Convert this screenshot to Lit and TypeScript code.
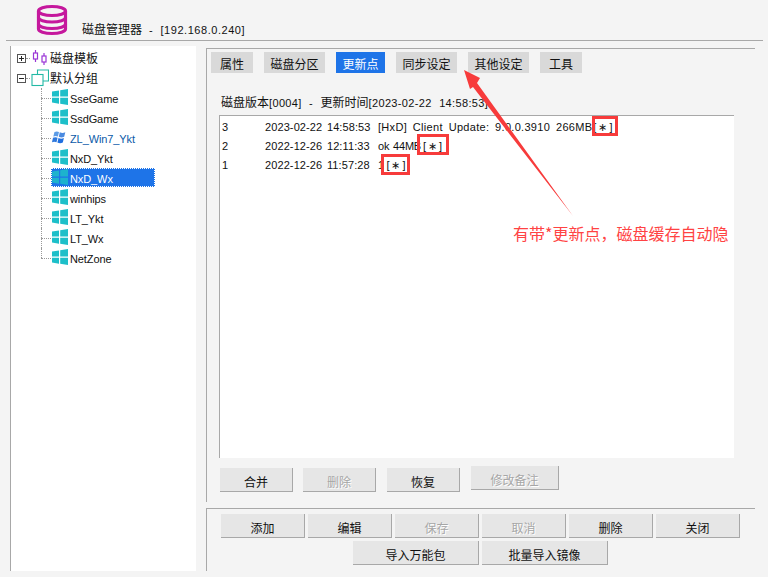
import { LitElement, html, css, svg } from "lit";
import { customElement } from "lit/decorators.js";

const split = (t: string) =>
  t.split(/([\u3000-\u9fff\uff00-\uffef]+)/).map((p, i) => (i % 2 ? html`<span class="cjk">${p}</span>` : p));

const winIcon = svg`<svg class="ico" width="16" height="16" viewBox="0 0 16 16"><path fill="#1dbfc9" d="M0 2.600 7 1.500v6H0zM8.200 1.300 16 0v7.500H8.200zM0 8.700h7v6L0 13.600zM8.200 8.700H16V16l-7.800-1.200z"/></svg>`;
const win7Icon = svg`<svg class="ico" width="16" height="16" viewBox="0 0 16 16"><path fill="#5b9be6" d="M2.500 3c1.800-.8 3.200-.6 4.500 0L5.900 7.500C4.500 6.800 3 6.700 1.300 7.500z"/><path fill="#4a8ae0" d="M7.800 3.300c1.800.9 3.500.9 5.500 0L12.200 7.800c-1.800.9-3.600.9-5.400 0z"/><path fill="#2f78dc" d="M1 8.700c1.700-.8 3.200-.7 4.600 0L4.500 13.300c-1.500-.8-3-.8-4.600 0z"/><path fill="#1f6fe0" d="M6.500 9c1.900.9 3.600.9 5.400 0l-1.100 4.600c-1.800.9-3.600.9-5.400 0z"/></svg>`;

type Node = { label: string; win7?: boolean; selected?: boolean };
const children: Node[] = [
  { label: "SseGame" },
  { label: "SsdGame" },
  { label: "ZL_Win7_Ykt", win7: true },
  { label: "NxD_Ykt" },
  { label: "NxD_Wx", selected: true },
  { label: "winhips" },
  { label: "LT_Ykt" },
  { label: "LT_Wx" },
  { label: "NetZone" },
];
const tabs = [
  { label: "属性", w: 42 },
  { label: "磁盘分区", w: 61 },
  { label: "更新点", w: 49, active: true },
  { label: "同步设定", w: 61 },
  { label: "其他设定", w: 61 },
  { label: "工具", w: 42 },
];
const rows = [
  { id: "3", date: "2023-02-22 14:58:53", note: "[HxD] Client Update: 9.0.0.3910 266MB", gap: 1, tight: false },
  { id: "2", date: "2022-12-26 12:11:33", note: "ok 44MB", gap: 2, tight: true },
  { id: "1", date: "2022-12-26 11:57:28", note: "1", gap: 2, tight: false },
];

@customElement("app-root")
class AppRoot extends LitElement {
  static styles = css`
    :host {
      display: block;
      width: 768px;
      height: 577px;
      position: relative;
      overflow: hidden;
      background: #f4f4f4;
      color: #111;
      font: 11px/16px "Liberation Sans", "Noto Sans CJK SC", sans-serif;
      word-spacing: 1.5px;
      letter-spacing: 0.1px;
    }
    .cjk { font: 12px/16px "Noto Sans CJK SC", sans-serif; letter-spacing: 0; }
    header {
      height: 40px;
      margin: 0 5px 0 6px;
      border-bottom: 1px solid #a8a8a8;
      display: flex;
      align-items: flex-start;
    }
    .logo { margin: 3px 0 0 29px; }
    .title { margin: 21px 0 0 13px; letter-spacing: 0.55px; word-spacing: 3.5px; }
    main { display: flex; align-items: flex-start; padding: 5px 0 0 10px; }
    .tree {
      width: 186px;
      height: 525px;
      box-sizing: border-box;
      background: #fff;
      border-left: 1px solid #a8a8a8;
      padding-top: 2px;
      position: relative;
      letter-spacing: -0.1px;
    }
    .node { height: 20px; display: flex; align-items: center; position: relative; white-space: nowrap; }
    .exp {
      width: 9px; height: 9px; box-sizing: border-box; border: 1px solid #555; margin-left: 6px;
      position: relative; background: #fff; flex: none;
    }
    .exp::before { content: ""; position: absolute; left: 1px; right: 1px; top: 3px; height: 1px; background: #222; }
    .exp.plus::after { content: ""; position: absolute; top: 1px; bottom: 1px; left: 3px; width: 1px; background: #222; }
    .dash { width: 4px; border-top: 1px dotted #999; flex: none; margin-right: 1px; }
    .child { padding-left: 30px; }
    .child .hl { width: 10px; border-top: 1px dotted #999; flex: none; }
    .child .vl { position: absolute; left: 30px; top: 0; bottom: 0; border-left: 1px dotted #999; }
    .child.last .vl { bottom: 10px; }
    .label { padding: 0 1px; }
    .item { display: flex; align-items: center; height: 19px; padding-left: 1px; margin-bottom: 2px; box-sizing: border-box; }
    .item .label { padding-top: 4px; line-height: 15px; }
    .item .ico { flex: none; margin-right: 1px; }
    .win7 .label { color: #0b5aa8; }
    .sel { background: #1e74e8; outline: 1px dotted #fff; outline-offset: -1px; width: 104px; color: #fff; }
    .sel .ico { opacity: 0.85; }
    .side { width: 549px; margin-left: 10px; }
    .panel {
      border: 1px solid #a8a8a8;
      border-width: 1px 0 0 1px;
      box-sizing: border-box;
    }
    .upper { height: 454px; padding: 3px 0 0 4px; margin-top: 2px; }
    .lower { height: 63px; margin-top: 6px; padding: 5px 0 0 14px; }
    .tabs { display: flex; gap: 11px; }
    .tab { height: 21px; box-sizing: border-box; padding-top: 2px; background: #d9d9d9; text-align: center; line-height: 19px; }
    .tab .cjk { line-height: 19px; }
    .tab.on { background: #1e74e8; color: #fff; }
    .caption { margin: 21px 0 0 10px; height: 16px; white-space: nowrap; letter-spacing: 0.35px; word-spacing: 4px; }
    .list {
      width: 515px;
      height: 343px;
      margin: 5px 0 0 8px;
      box-sizing: border-box;
      background: #fff;
      border: 1px solid #a8a8a8;
      border-width: 1px 0 0 1px;
      padding: 2px 0 0 2px;
    }
    .line { display: grid; grid-template-columns: 43px 113px 1fr; height: 19px; line-height: 19px; white-space: nowrap; }
    .rem { letter-spacing: 0.3px; word-spacing: 2.5px; }
    .rem.tight { letter-spacing: -0.2px; word-spacing: 1px; }
    .star { margin-left: var(--gap); letter-spacing: 2px; }
    .actions { display: flex; align-items: flex-start; margin: 10px 0 0 9px; }
    .btn {
      height: 24px;
      box-sizing: border-box;
      padding-top: 4px;
      background: #e6e6e6;
      border-right: 1px solid #a8a8a8;
      border-bottom: 1px solid #a8a8a8;
      text-align: center;
      line-height: 19px;
      flex: none;
    }
    .btn .cjk { line-height: 19px; }
    .btn.off { color: #a6a6a6; text-shadow: 1px 1px 0 #fff; }
    .actions .btn { width: 73px; margin-right: 11px; }
    .actions .btn:first-child { margin-right: 10px; }
    .actions .btn.wide { width: 88px; margin-top: -2px; }
    .btnrow { display: flex; gap: 3px; }
    .btnrow .btn { width: 84px; }
    .btnrow.second { margin: 3px 0 0 132px; }
    .btnrow.second .btn { width: 126px; }
    .anno { position: absolute; left: 0; top: 0; pointer-events: none; }
    .mark { position: absolute; box-sizing: border-box; border: 3px solid #f73b3b; }
    .note {
      position: absolute; left: 513px; top: 222px; white-space: nowrap; color: #ff4343;
      font: 16px/22px "Noto Sans CJK SC", sans-serif; letter-spacing: 0;
    }
  `;

  render() {
    return html`
      <header>
        <svg class="logo" width="34" height="34" viewBox="0 0 34 34" fill="none" stroke="#c5189d" stroke-width="3.200">
          <ellipse cx="17" cy="8" rx="13.500" ry="4.500" />
          <path d="M3.500 8v18c0 2.500 6 4.500 13.500 4.500S30.500 28.500 30.500 26V8" />
          <path d="M3.500 14.500c0 2.500 6 4.500 13.500 4.500s13.500-2 13.500-4.500M3.500 21c0 2.500 6 4.500 13.500 4.500S30.500 23.500 30.500 21" />
        </svg>
        <div class="title">${split("磁盘管理器 - [192.168.0.240]")}</div>
      </header>
      <main>
        <nav class="tree">
          <div class="node root">
            <span class="exp plus"></span><span class="dash"></span>
            <svg width="18" height="18" viewBox="0 0 18 18" fill="none" stroke="#9a35d6" stroke-width="1.200">
              <path d="M4.500 1v3M4.500 10v3M13 4v3M13 13v3" /><rect x="2.500" y="4" width="4" height="6" /><rect x="11" y="7" width="4" height="6" />
            </svg>
            <span class="label"><span class="cjk">磁盘模板</span></span>
          </div>
          <div class="node root">
            <span class="exp"></span><span class="dash"></span>
            <svg width="18" height="18" viewBox="0 0 18 18" fill="none" stroke="#22b9a5" stroke-width="1.100">
              <rect x="1" y="5.500" width="11" height="11" /><path d="M6.500 5.500V1h11v11H12" />
            </svg>
            <span class="label"><span class="cjk">默认分组</span></span>
          </div>
          ${children.map(
            (n, i) => html`
              <div class="node child ${i === children.length - 1 ? "last" : ""} ${n.win7 ? "win7" : ""}">
                <span class="vl"></span><span class="hl"></span>
                <div class="item ${n.selected ? "sel" : ""}">
                  ${n.win7 ? win7Icon : winIcon}<span class="label">${n.label}</span>
                </div>
              </div>
            `
          )}
        </nav>
        <section class="side">
          <div class="panel upper">
            <div class="tabs">
              ${tabs.map(
                (t) => html`<div class="tab ${t.active ? "on" : ""}" style="width:${t.w}px"><span class="cjk">${t.label}</span></div>`
              )}
            </div>
            <div class="caption">${split("磁盘版本[0004] - 更新时间[2023-02-22 14:58:53]")}</div>
            <div class="list">
              ${rows.map(
                (r) => html`<div class="line">
                  <span>${r.id}</span><span>${r.date}</span>
                  <span class="rem ${r.tight ? "tight" : ""}">${r.note}<span class="star" style="--gap:${r.gap}px">[∗]</span></span>
                </div>`
              )}
            </div>
            <div class="actions">
              <div class="btn"><span class="cjk">合并</span></div>
              <div class="btn off"><span class="cjk">删除</span></div>
              <div class="btn"><span class="cjk">恢复</span></div>
              <div class="btn off wide"><span class="cjk">修改备注</span></div>
            </div>
          </div>
          <div class="panel lower">
            <div class="btnrow">
              <div class="btn"><span class="cjk">添加</span></div>
              <div class="btn"><span class="cjk">编辑</span></div>
              <div class="btn off"><span class="cjk">保存</span></div>
              <div class="btn off"><span class="cjk">取消</span></div>
              <div class="btn"><span class="cjk">删除</span></div>
              <div class="btn"><span class="cjk">关闭</span></div>
            </div>
            <div class="btnrow second">
              <div class="btn"><span class="cjk">导入万能包</span></div>
              <div class="btn"><span class="cjk">批量导入镜像</span></div>
            </div>
          </div>
        </section>
      </main>
      <svg class="anno" width="768" height="577" viewBox="0 0 768 577">
        <path fill="#f73b3b" d="M464 70 480 78 477 83 573 216 473 87 470 89z" />
      </svg>
      <div class="mark" style="left:592px;top:116px;width:26px;height:20px"></div>
      <div class="mark" style="left:417px;top:134px;width:32px;height:21px"></div>
      <div class="mark" style="left:381px;top:154px;width:29px;height:21px"></div>
      <div class="note">有带*更新点，磁盘缓存自动隐</div>
    `;
  }
}
